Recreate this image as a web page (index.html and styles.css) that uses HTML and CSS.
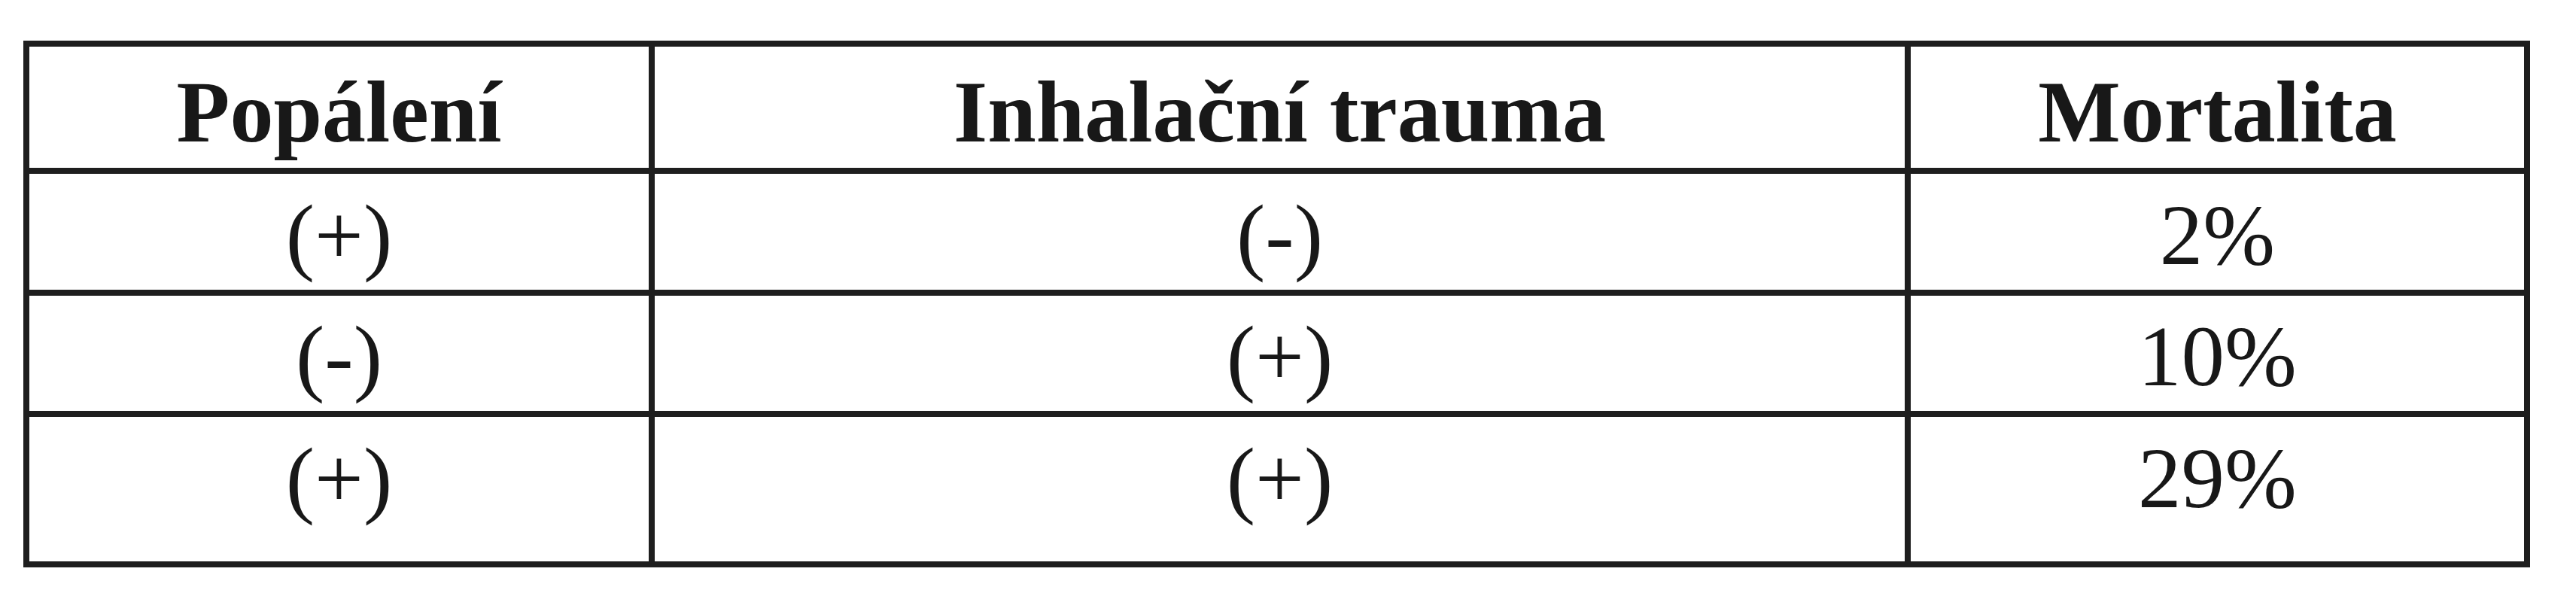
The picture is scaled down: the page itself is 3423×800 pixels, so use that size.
FILE: index.html
```html
<!DOCTYPE html>
<html lang="cs">
<head>
<meta charset="utf-8">
<title>Mortalita</title>
<link rel="stylesheet" href="styles.css">
</head>
<body>
<table class="grid">
  <colgroup>
    <col class="c1">
    <col class="c2">
    <col class="c3">
  </colgroup>
  <thead>
    <tr class="head">
      <th>Popálení</th>
      <th>Inhalační trauma</th>
      <th>Mortalita</th>
    </tr>
  </thead>
  <tbody>
    <tr class="r1">
      <td>(+)</td>
      <td>(-)</td>
      <td>2%</td>
    </tr>
    <tr class="r2">
      <td>(-)</td>
      <td>(+)</td>
      <td>10%</td>
    </tr>
    <tr class="r3">
      <td>(+)</td>
      <td>(+)</td>
      <td>29%</td>
    </tr>
  </tbody>
</table>
</body>
</html>
```

FILE: styles.css
```css
html, body {
  margin: 0;
  padding: 0;
  background: #ffffff;
}

body {
  width: 3423px;
  height: 800px;
  overflow: hidden;
  padding-top: 54px;
  padding-left: 31px;
  box-sizing: border-box;
  font-family: "Liberation Serif", "Times New Roman", serif;
  color: #181818;
}

.grid {
  border-collapse: separate;
  border-spacing: 0;
  table-layout: fixed;
  width: 3331px;
  border-top: 8px solid #1e1e1e;
  border-left: 8px solid #1e1e1e;
}

.c1 { width: 831px; }
.c2 { width: 1669px; }
.c3 { width: 823px; }

.grid th,
.grid td {
  border-right: 8px solid #1e1e1e;
  border-bottom: 8px solid #1e1e1e;
  padding: 0;
  text-align: center;
  vertical-align: top;
  line-height: 116px;
  box-sizing: border-box;
  white-space: nowrap;
}

.grid th {
  font-weight: bold;
  font-size: 116px;
  padding-top: 29px;
  height: 169px;
}

.grid td {
  font-weight: normal;
  font-size: 115px;
}

.r1 td {
  padding-top: 24px;
  height: 162px;
}

.r2 td {
  padding-top: 23px;
  height: 161px;
}

.r3 td {
  padding-top: 24px;
  height: 200px;
}
```
